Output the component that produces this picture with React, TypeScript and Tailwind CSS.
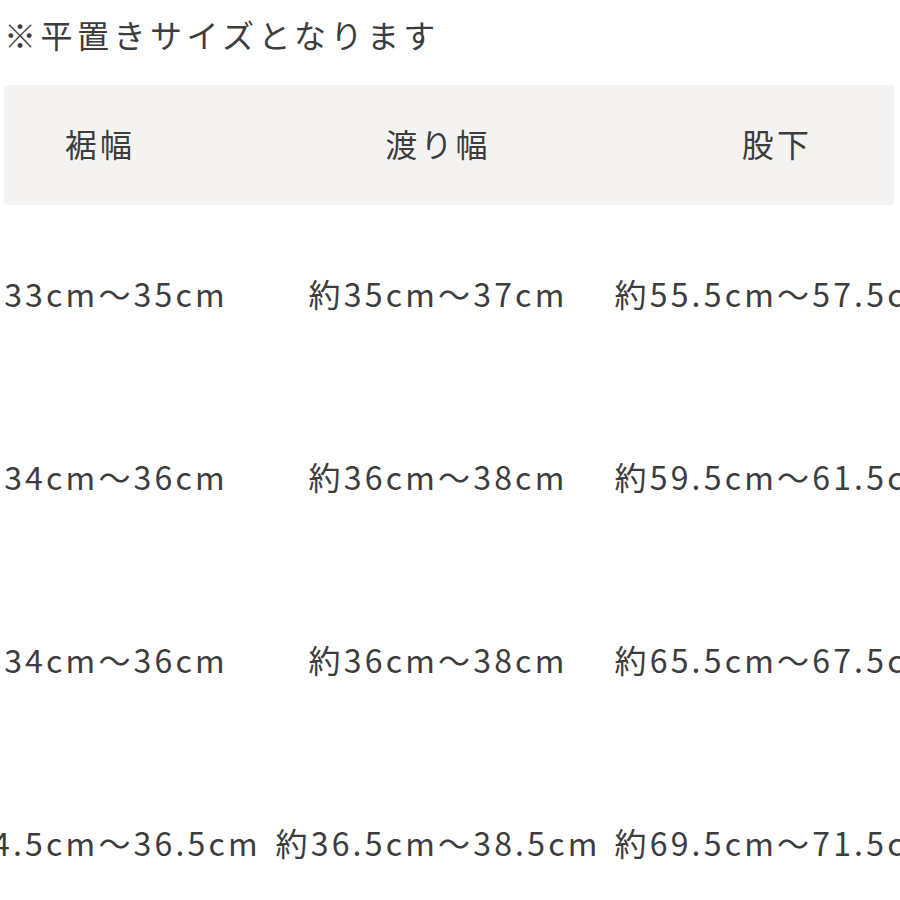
import React from 'react';

const rows = [
  ['33cm〜35cm', '約35cm〜37cm', '約55.5cm〜57.5cm'],
  ['34cm〜36cm', '約36cm〜38cm', '約59.5cm〜61.5cm'],
  ['34cm〜36cm', '約36cm〜38cm', '約65.5cm〜67.5cm'],
  ['34.5cm〜36.5cm', '約36.5cm〜38.5cm', '約69.5cm〜71.5cm'],
];

// column widths from the left edge of the header band (x=4)
const cols = 'grid grid-cols-[224px_420px_258px]';

export default function App() {
  return (
    <div
      className="w-[900px] h-[900px] overflow-hidden bg-white text-[#3d3d3d]"
      style={{ fontFamily: '"Noto Sans CJK JP", "Noto Sans", sans-serif' }}
    >
      {/* Note */}
      <div className="h-[68px] flex items-center pl-[4px] text-[32px] tracking-[0.14em] leading-none">
        ※平置きサイズとなります
      </div>

      {/* Size table */}
      <div className="mt-[17px] ml-[4px]">
        <div className="w-[890px] h-[120px] bg-[#f4f3f1] rounded-[3px]">
          <div className={`${cols} h-full items-center pb-[4px] text-[32px] tracking-[0.1em] leading-none`}>
            <div className="flex justify-center pr-[32px] whitespace-nowrap">裾幅</div>
            <div className="flex justify-center whitespace-nowrap">渡り幅</div>
            <div className="flex justify-center whitespace-nowrap">股下</div>
          </div>
        </div>

        {rows.map((r, i) => (
          <div key={i} className={`${cols} h-[183px] items-center pb-[8px] text-[32px] tracking-[0.1em] leading-none`}>
            {r.map((cell, j) => (
              <div key={j} className="flex justify-center whitespace-nowrap">
                {cell}
              </div>
            ))}
          </div>
        ))}
      </div>
    </div>
  );
}
